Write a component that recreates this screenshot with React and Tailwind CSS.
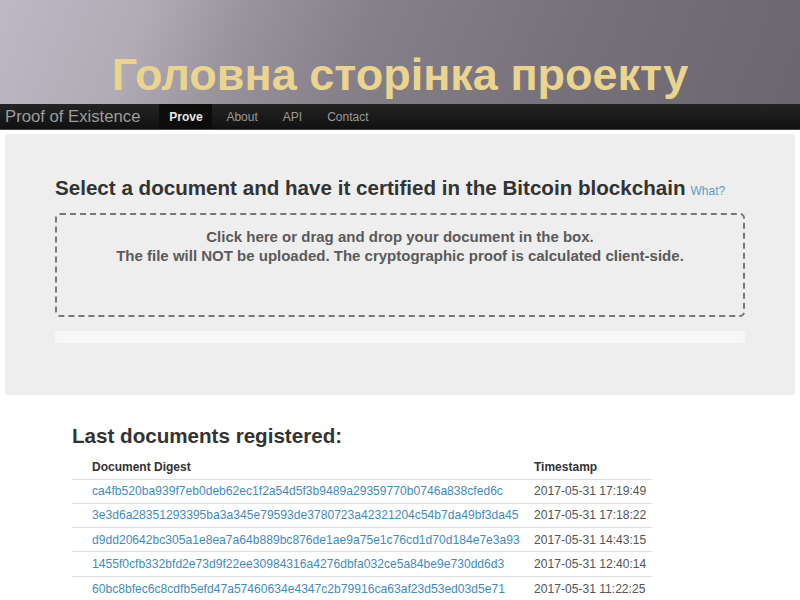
export default function App() {
  const rows = [
    ["ca4fb520ba939f7eb0deb62ec1f2a54d5f3b9489a29359770b0746a838cfed6c", "2017-05-31 17:19:49"],
    ["3e3d6a28351293395ba3a345e79593de3780723a42321204c54b7da49bf3da45", "2017-05-31 17:18:22"],
    ["d9dd20642bc305a1e8ea7a64b889bc876de1ae9a75e1c76cd1d70d184e7e3a93", "2017-05-31 14:43:15"],
    ["1455f0cfb332bfd2e73d9f22ee30984316a4276dbfa032ce5a84be9e730dd6d3", "2017-05-31 12:40:14"],
    ["60bc8bfec6c8cdfb5efd47a57460634e4347c2b79916ca63af23d53ed03d5e71", "2017-05-31 11:22:25"],
  ];
  return (
    <div className="w-[800px] h-[600px] overflow-hidden bg-white font-['Liberation_Sans',Arial,sans-serif]">
      <div className="h-[104px] flex items-end justify-center pb-[7px] bg-[linear-gradient(112deg,#bdb8c3_0%,#b0abb5_18%,#98939c_30%,#85808a_45%,#76717a_70%,#6b676e_100%)]">
        <h1 className="text-[45px] leading-none font-bold text-[#ead48e]">Головна сторінка проекту</h1>
      </div>
      <div className="h-[26px] flex items-stretch bg-[linear-gradient(#242424,#111111)] border-b border-[#444]">
        <div className="pl-[5px] pr-[19px] flex items-center text-[16.7px] text-[#9d9d9d]">Proof of Existence</div>
        <div className="w-[53px] flex items-center justify-center bg-[#0c0c0c] text-[12px] font-bold text-[#e8e8e8]">Prove</div>
        <div className="flex items-center pl-[14px] text-[12px] text-[#9a9a9a] gap-[25px]">
          <span>About</span>
          <span>API</span>
          <span>Contact</span>
        </div>
      </div>
      <div className="mx-[5px] mt-[4px] h-[261px] rounded-[4px] bg-[#eeeeee] px-[50px] pt-[41px]">
        <div className="flex items-baseline gap-[5px]">
          <span className="text-[20.6px] leading-[26px] font-bold text-[#333]">Select a document and have it certified in the Bitcoin blockchain</span>
          <span className="text-[12px] text-[#5b9bd1]">What?</span>
        </div>
        <div className="mt-[12px] h-[104px] border-2 border-dashed border-[#777] rounded-[5px] flex flex-col items-center pt-[12px] text-[15px] font-bold text-[#5a5a5a] leading-[19px]">
          <div>Click here or drag and drop your document in the box.</div>
          <div>The file will NOT be uploaded. The cryptographic proof is calculated client-side.</div>
        </div>
        <div className="mt-[14px] h-[12px] rounded-[3px] bg-[#f7f7f7]"></div>
      </div>
      <div className="pl-[72px] pt-[29px]">
        <h2 className="text-[20.6px] font-bold text-[#333] leading-[24px]">Last documents registered:</h2>
        <table className="mt-[8px] w-[580px] text-[12.1px] border-collapse">
          <thead>
            <tr className="h-[23px]">
              <th className="text-left font-bold text-[#333] pl-[20px] text-[12px]">Document Digest</th>
              <th className="text-left font-bold text-[#333] pl-[6px] text-[12px]">Timestamp</th>
            </tr>
          </thead>
          <tbody>
            {rows.map(([d, t]) => (
              <tr key={d} className="h-[24.3px] border-t border-[#dddddd]">
                <td className="pl-[20px] text-[#3f8cc3] w-[456px]">{d}</td>
                <td className="pl-[6px] text-[#555]">{t}</td>
              </tr>
            ))}
          </tbody>
        </table>
      </div>
    </div>
  );
}
